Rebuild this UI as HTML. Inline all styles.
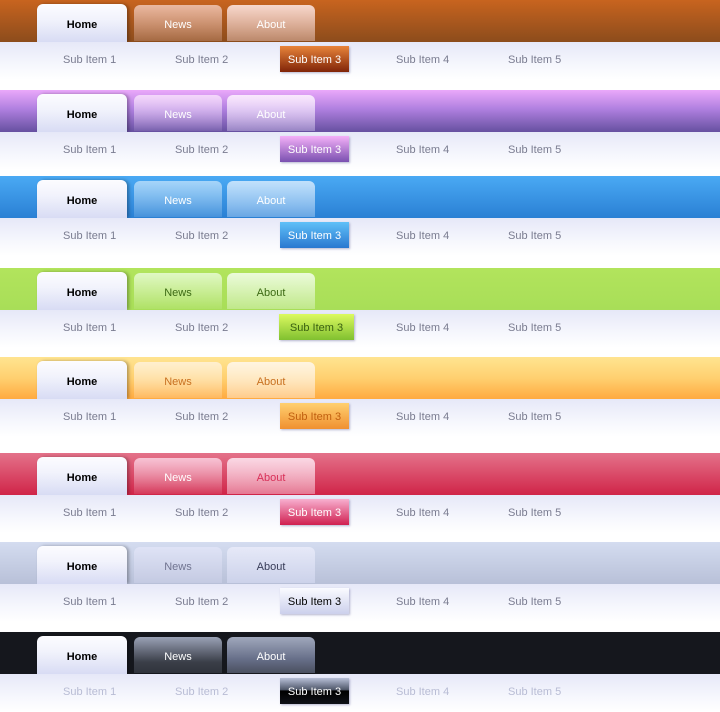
<!DOCTYPE html><html><head><style>
*{margin:0;padding:0;box-sizing:border-box}
body{width:720px;height:710px;background:#fff;position:relative;overflow:hidden;font-family:"Liberation Sans",sans-serif;font-size:11px}
.m{position:absolute;left:0;width:720px;height:80px}
.bar{position:absolute;left:0;top:0;width:720px;height:42px}
.sub{position:absolute;left:0;top:42px;width:720px;height:38px;background:linear-gradient(#e6e8f8,#f6f7fd 60%,#fff)}
.t{position:absolute;top:5px;height:36px;border-radius:6px 6px 0 0;text-align:center;line-height:40px;font-size:11px}
.home{left:37px;top:4px;width:90px;height:38px;background:linear-gradient(#fcfcff,#f2f3fc 40%,#d8dcf4);color:#000;font-weight:bold;box-shadow:2px 0 3px rgba(0,0,0,.3);line-height:42px}
.n{left:134px;width:88px}.a{left:227px;width:88px}
.s{position:absolute;top:18px;font-size:11px;color:#7a7c90;transform:translateY(-50%)}
.b{position:absolute;left:280px;top:4px;width:69px;height:26px;line-height:28px;text-align:center;color:#fff;box-shadow:1px 1px 2px rgba(80,80,140,.4)}
</style></head><body>
<div class="m" style="top:0">
<div class="bar" style="background:linear-gradient(#c8641f,#8c4c1c)"></div>
<div class="t home">Home</div>
<div class="t n" style="background:linear-gradient(rgba(255,230,230,.65),rgba(255,220,220,.2));color:#fff">News</div>
<div class="t a" style="background:linear-gradient(rgba(255,235,235,.85),rgba(255,225,225,.4));color:#fff">About</div>
<div class="sub"><span class="s" style="left:63px">Sub Item 1</span><span class="s" style="left:175px">Sub Item 2</span><div class="b" style="background:linear-gradient(#e8843a,#802408)">Sub Item 3</div><span class="s" style="left:396px">Sub Item 4</span><span class="s" style="left:508px">Sub Item 5</span></div></div>

<div class="m" style="top:90px">
<div class="bar" style="background:linear-gradient(#eaa8fa,#b080e0 45%,#6650a0)"></div>
<div class="t home">Home</div>
<div class="t n" style="background:linear-gradient(rgba(255,240,255,.7),rgba(240,220,255,.1));color:#fff">News</div>
<div class="t a" style="background:linear-gradient(rgba(255,245,255,.85),rgba(235,225,255,.35));color:#fff">About</div>
<div class="sub"><span class="s" style="left:63px">Sub Item 1</span><span class="s" style="left:175px">Sub Item 2</span><div class="b" style="background:linear-gradient(#f4b0f8,#7a50b0)">Sub Item 3</div><span class="s" style="left:396px">Sub Item 4</span><span class="s" style="left:508px">Sub Item 5</span></div></div>

<div class="m" style="top:176px">
<div class="bar" style="background:linear-gradient(#4aaaf4,#2a80d4)"></div>
<div class="t home">Home</div>
<div class="t n" style="background:linear-gradient(rgba(230,245,255,.6),rgba(220,240,255,.15));color:#fff">News</div>
<div class="t a" style="background:linear-gradient(rgba(235,245,255,.75),rgba(220,235,255,.35));color:#fff">About</div>
<div class="sub"><span class="s" style="left:63px">Sub Item 1</span><span class="s" style="left:175px">Sub Item 2</span><div class="b" style="background:linear-gradient(#60c0f8,#2a78d0)">Sub Item 3</div><span class="s" style="left:396px">Sub Item 4</span><span class="s" style="left:508px">Sub Item 5</span></div></div>

<div class="m" style="top:268px">
<div class="bar" style="background:linear-gradient(#b2e45c,#a8de58)"></div>
<div class="t home">Home</div>
<div class="t n" style="background:linear-gradient(rgba(240,255,230,.75),rgba(230,250,220,.1));color:#3c6a14">News</div>
<div class="t a" style="background:linear-gradient(rgba(245,255,240,.85),rgba(235,250,230,.35));color:#3c6a14">About</div>
<div class="sub"><span class="s" style="left:63px">Sub Item 1</span><span class="s" style="left:175px">Sub Item 2</span><div class="b" style="left:279px;width:75px;background:linear-gradient(#dcfa60,#80c030);color:#3a6010">Sub Item 3</div><span class="s" style="left:396px">Sub Item 4</span><span class="s" style="left:508px">Sub Item 5</span></div></div>

<div class="m" style="top:357px">
<div class="bar" style="background:linear-gradient(#ffe490,#ffd070 50%,#ffaa40)"></div>
<div class="t home">Home</div>
<div class="t n" style="background:linear-gradient(rgba(255,245,230,.75),rgba(255,235,210,.2));color:#c87020">News</div>
<div class="t a" style="background:linear-gradient(rgba(255,248,240,.85),rgba(255,240,225,.45));color:#c87020">About</div>
<div class="sub"><span class="s" style="left:63px">Sub Item 1</span><span class="s" style="left:175px">Sub Item 2</span><div class="b" style="background:linear-gradient(#ffd070,#f09030);color:#c06010">Sub Item 3</div><span class="s" style="left:396px">Sub Item 4</span><span class="s" style="left:508px">Sub Item 5</span></div></div>

<div class="m" style="top:453px">
<div class="bar" style="background:linear-gradient(#e4728a,#d02448)"></div>
<div class="t home">Home</div>
<div class="t n" style="background:linear-gradient(rgba(255,225,240,.75),rgba(255,210,225,.1));color:#fff">News</div>
<div class="t a" style="background:linear-gradient(rgba(255,235,245,.85),rgba(255,220,235,.45));color:#d83058">About</div>
<div class="sub"><span class="s" style="left:63px">Sub Item 1</span><span class="s" style="left:175px">Sub Item 2</span><div class="b" style="background:linear-gradient(#f8b0d0,#d02050)">Sub Item 3</div><span class="s" style="left:396px">Sub Item 4</span><span class="s" style="left:508px">Sub Item 5</span></div></div>

<div class="m" style="top:542px">
<div class="bar" style="background:linear-gradient(#d4dcf0,#b8c0d8)"></div>
<div class="t home">Home</div>
<div class="t n" style="background:linear-gradient(#dfe3f6,#c4cae2);color:#707490">News</div>
<div class="t a" style="background:linear-gradient(#e6e9f8,#ccd2ea);color:#383c58">About</div>
<div class="sub"><span class="s" style="left:63px">Sub Item 1</span><span class="s" style="left:175px">Sub Item 2</span><div class="b" style="background:linear-gradient(#fafbff,#ccd0ec);color:#000">Sub Item 3</div><span class="s" style="left:396px">Sub Item 4</span><span class="s" style="left:508px">Sub Item 5</span></div></div>

<div class="m" style="top:632px">
<div class="bar" style="background:#15171d"></div>
<div class="t home">Home</div>
<div class="t n" style="background:linear-gradient(#9aa2b6,#3a3e48 70%,#30343c);color:#fff">News</div>
<div class="t a" style="background:linear-gradient(#a0a8bc,#68708a 60%,#4a5060);color:#fff">About</div>
<div class="sub"><span class="s" style="left:63px;color:#b8bcd4">Sub Item 1</span><span class="s" style="left:175px;color:#b8bcd4">Sub Item 2</span><div class="b" style="background:linear-gradient(#b8c0d8,#50586a 45%,#000 50%,#101218)">Sub Item 3</div><span class="s" style="left:396px;color:#b8bcd4">Sub Item 4</span><span class="s" style="left:508px;color:#b8bcd4">Sub Item 5</span></div></div>
</body></html>
